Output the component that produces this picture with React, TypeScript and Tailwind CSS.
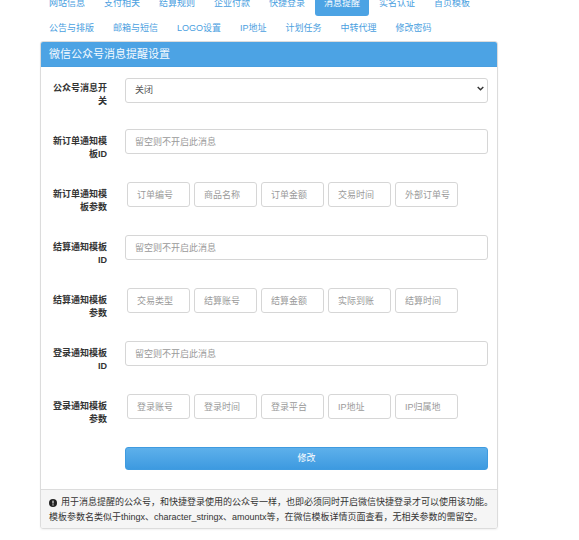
import React from "react";

const navRow = [
  "网站信息",
  "支付相关",
  "结算规则",
  "企业付款",
  "快捷登录",
  "消息提醒",
  "实名认证",
  "首页模板",
  "公告与排版",
  "邮箱与短信",
  "LOGO设置",
  "IP地址",
  "计划任务",
  "中转代理",
  "修改密码",
];

const rows: { label: string; kind: "select" | "input" | "params"; params?: string[] }[] = [
  { label: "公众号消息开关", kind: "select" },
  { label: "新订单通知模板ID", kind: "input" },
  { label: "新订单通知模板参数", kind: "params", params: ["订单编号", "商品名称", "订单金额", "交易时间", "外部订单号"] },
  { label: "结算通知模板ID", kind: "input" },
  { label: "结算通知模板参数", kind: "params", params: ["交易类型", "结算账号", "结算金额", "实际到账", "结算时间"] },
  { label: "登录通知模板ID", kind: "input" },
  { label: "登录通知模板参数", kind: "params", params: ["登录账号", "登录时间", "登录平台", "IP地址", "IP归属地"] },
];

function Field({ row }: { row: (typeof rows)[number] }) {
  if (row.kind === "select") {
    return (
      <div className="relative flex-1">
        <select className="appearance-none w-full h-[25px] pl-[9px] bg-white border border-[#d6d6d6] rounded-[3px] text-[9px] text-[#555] outline-none">
          <option>关闭</option>
          <option>开启</option>
        </select>
        <svg className="absolute right-[4px] top-[10px] w-[7px] h-[5px] pointer-events-none" viewBox="0 0 10 7">
          <path d="M1 1.2l4 4 4-4" fill="none" stroke="#333" strokeWidth="2" />
        </svg>
      </div>
    );
  }
  if (row.kind === "input") {
    return (
      <input
        placeholder="留空则不开启此消息"
        className="flex-1 h-[25px] pl-[9px] bg-white border border-[#d6d6d6] rounded-[3px] text-[9px] text-[#555] placeholder-[#9a9a9a] outline-none"
      />
    );
  }
  return (
    <div className="flex gap-[4px] ml-[2px]">
      {row.params!.map((p) => (
        <input
          key={p}
          placeholder={p}
          className="w-[63px] h-[25px] pl-[9px] bg-white border border-[#d6d6d6] rounded-[3px] text-[9px] text-[#555] placeholder-[#9a9a9a] outline-none"
        />
      ))}
    </div>
  );
}

export default function App() {
  return (
    <div className="min-h-[540px] bg-white font-['Liberation_Sans','Noto_Sans_CJK_SC',sans-serif] overflow-hidden">
      <div className="ml-[40px] w-[458px] -mt-[9px]">
        {/* tabs */}
        <ul className="flex flex-wrap">
          {navRow.map((t) => {
            const active = t === "消息提醒";
            return (
              <li key={t} className="mr-[1px]">
                <a
                  className={
                    active
                      ? "block px-[9px] py-[7px] leading-[11px] text-[9px] rounded-[3px] bg-[#4ca3e4] text-white"
                      : "block px-[9px] py-[7px] leading-[11px] text-[9px] rounded-[3px] text-[#4aa0e0]"
                  }
                >
                  {t}
                </a>
              </li>
            );
          })}
        </ul>

        {/* panel */}
        <div className="border border-[#dcdcdc] rounded-[3px] shadow-[0_1px_2px_rgba(0,0,0,0.06)]">
          <div className="h-[25px] flex items-center px-[8px] bg-[#4ca3e4] border-b border-[#4a9fe0] rounded-t-[2px] text-[11px] text-[#f4faff]">
            微信公众号消息提醒设置
          </div>
          <div className="pt-[9px] pb-[19px] pl-[8px] pr-[9px]">
            {rows.map((r) => (
              <div key={r.label} className="flex items-start mb-[21px]">
                <div className="w-[58px] pt-[6px] text-right text-[9px] leading-[13px] font-bold text-[#333]">
                  {r.label}
                </div>
                <div className="flex-1 flex ml-[18px]">
                  <Field row={r} />
                </div>
              </div>
            ))}
            <div className="flex">
              <div className="w-[58px]" />
              <button className="flex-1 ml-[18px] h-[23px] rounded-[3px] bg-gradient-to-b from-[#5db0eb] to-[#3d9ae0] border border-[#3f9be0] text-white text-[9px]">
                修改
              </button>
            </div>
          </div>
          <div className="bg-[#f5f5f5] border-t border-[#dcdcdc] pl-[8px] pr-[4px] pt-[5px] pb-[3px] text-[9px] leading-[15px] text-[#333] rounded-b-[2px] whitespace-nowrap">
            <div className="flex items-center">
              <svg className="w-[8px] h-[8px] mr-[4px] shrink-0" viewBox="0 0 16 16">
                <circle cx="8" cy="8" r="8" fill="#222" />
                <rect x="6.9" y="3.2" width="2.2" height="6" rx="0.6" fill="#fff" />
                <rect x="6.9" y="10.6" width="2.2" height="2.2" rx="0.5" fill="#fff" />
              </svg>
              <span>用于消息提醒的公众号，和快捷登录使用的公众号一样，也即必须同时开启微信快捷登录才可以使用该功能。</span>
            </div>
            <div>模板参数名类似于thingx、character_stringx、amountx等，在微信模板详情页面查看，无相关参数的需留空。</div>
          </div>
        </div>
      </div>
    </div>
  );
}
